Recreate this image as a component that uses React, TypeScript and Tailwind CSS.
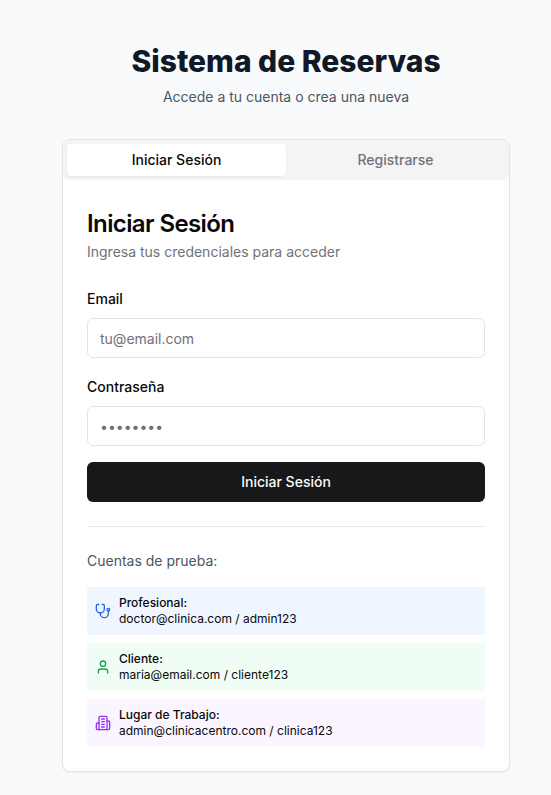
import React from "react";
import { User } from "lucide-react";

function Stethoscope({ className }: { className?: string }) {
  return (
    <svg className={className} viewBox="0 0 24 24" fill="none" stroke="currentColor" strokeWidth="2" strokeLinecap="round" strokeLinejoin="round">
      <path d="M4.8 2.3A.3.3 0 1 0 5 2H4a2 2 0 0 0-2 2v5a6 6 0 0 0 6 6 6 6 0 0 0 6-6V4a2 2 0 0 0-2-2h-1a.2.2 0 1 0 .3.3" />
      <path d="M8 15v1a6 6 0 0 0 6 6 6 6 0 0 0 6-6v-4" />
      <circle cx="20" cy="10" r="2" />
    </svg>
  );
}

function Building({ className }: { className?: string }) {
  return (
    <svg className={className} viewBox="0 0 24 24" fill="none" stroke="currentColor" strokeWidth="2" strokeLinecap="round" strokeLinejoin="round">
      <path d="M6 22V4a2 2 0 0 1 2-2h8a2 2 0 0 1 2 2v18Z" />
      <path d="M6 12H4a2 2 0 0 0-2 2v6a2 2 0 0 0 2 2h2" />
      <path d="M18 9h2a2 2 0 0 1 2 2v9a2 2 0 0 1-2 2h-2" />
      <path d="M10 6h4" />
      <path d="M10 10h4" />
      <path d="M10 14h4" />
      <path d="M10 18h4" />
    </svg>
  );
}

const accounts = [
  { Icon: Stethoscope, bg: "bg-[#eff6ff]", fg: "text-[#2563eb]", title: "Profesional:", text: "doctor@clinica.com / admin123" },
  { Icon: User, bg: "bg-[#f0fdf4]", fg: "text-[#16a34a]", title: "Cliente:", text: "maria@email.com / cliente123" },
  { Icon: Building, bg: "bg-[#faf5ff]", fg: "text-[#9333ea]", title: "Lugar de Trabajo:", text: "admin@clinicacentro.com / clinica123" },
];

function Field({ label, type, placeholder }: { label: string; type: string; placeholder: string }) {
  return (
    <div>
      <label className="block text-sm leading-[14px] font-medium">{label}</label>
      <input
        type={type}
        placeholder={placeholder}
        className="mt-3 block h-10 w-full rounded-md border border-[#e4e4e7] bg-white px-3 py-2 text-sm placeholder:text-[#71717a]"
      />
    </div>
  );
}

export default function App() {
  return (
    <div className="min-h-[795px] bg-[#f9fafb] pt-[43px] pl-[62px] font-['Inter',sans-serif] text-[#09090b]">
      <div className="w-[448px]">
        <div className="text-center">
          <h1 className="text-3xl font-extrabold text-[#111827]">Sistema de Reservas</h1>
          <p className="mt-2 text-sm text-[#4b5563]">Accede a tu cuenta o crea una nueva</p>
        </div>
        <div className="mt-8 rounded-lg border border-[#e4e4e7] bg-white shadow-xs">
          <div className="grid h-10 grid-cols-2 rounded-md bg-[#f4f4f5] p-1 text-sm font-medium text-[#71717a]">
            <button className="rounded-sm bg-white text-[#09090b] shadow-xs">Iniciar Sesión</button>
            <button>Registrarse</button>
          </div>
          <div className="px-6 pt-8 pb-6">
            <h2 className="text-2xl leading-6 font-semibold tracking-tight">Iniciar Sesión</h2>
            <p className="mt-1.5 text-sm text-[#71717a]">Ingresa tus credenciales para acceder</p>
            <form className="mt-[30px] flex flex-col">
              <Field label="Email" type="text" placeholder="tu@email.com" />
              <div className="mt-[22px]">
                <Field label="Contraseña" type="password" placeholder="••••••••" />
              </div>
              <button type="button" className="mt-4 h-10 rounded-md bg-[#18181b] text-sm font-medium text-[#fafafa]">
                Iniciar Sesión
              </button>
            </form>
            <div className="mt-6 border-t border-[#e5e7eb] pt-6">
              <p className="text-sm text-[#4b5563]">Cuentas de prueba:</p>
              <div className="mt-4 space-y-2">
                {accounts.map(({ Icon, bg, fg, title, text }) => (
                  <div key={title} className={`flex items-center gap-2 p-2 text-xs ${bg}`}>
                    <Icon className={`size-4 ${fg}`} />
                    <div>
                      <div className="font-medium">{title}</div>
                      <div>{text}</div>
                    </div>
                  </div>
                ))}
              </div>
            </div>
          </div>
        </div>
      </div>
    </div>
  );
}
